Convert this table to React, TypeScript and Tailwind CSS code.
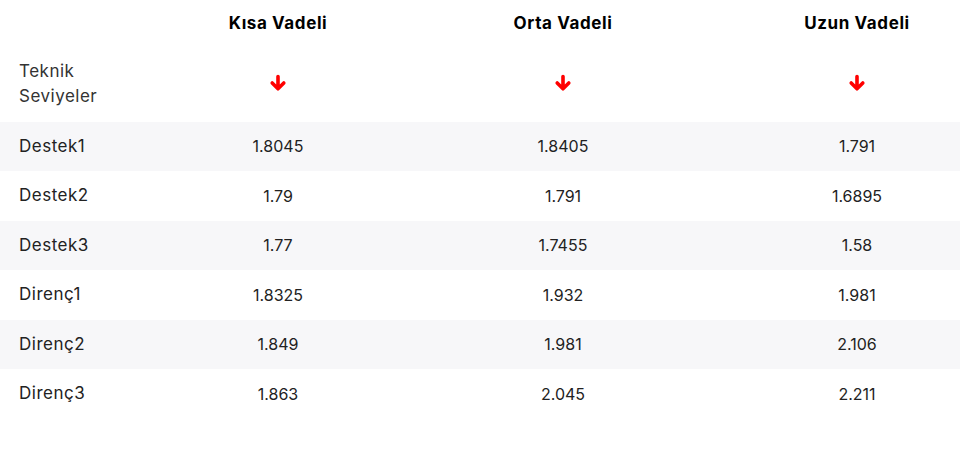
import React from "react";

const rows: [string, string, string, string][] = [
  ["Destek1", "1.8045", "1.8405", "1.791"],
  ["Destek2", "1.79", "1.791", "1.6895"],
  ["Destek3", "1.77", "1.7455", "1.58"],
  ["Direnç1", "1.8325", "1.932", "1.981"],
  ["Direnç2", "1.849", "1.981", "2.106"],
  ["Direnç3", "1.863", "2.045", "2.211"],
];

function DownArrow() {
  return (
    <svg width="18" height="18" viewBox="0 0 18 18" fill="none">
      <path
        d="M9 2.5V14.5M3.2 9L9 14.8L14.8 9"
        stroke="#ff0000"
        strokeWidth="3.6"
        strokeLinecap="round"
        strokeLinejoin="round"
      />
    </svg>
  );
}

export default function App() {
  return (
    <div
      className="w-[960px] h-[449px] bg-white text-[#222] overflow-hidden"
      style={{ fontFamily: "Inter, 'Noto Sans', sans-serif" }}
    >
      <div className="grid grid-cols-[184px_188px_382px_206px] h-[47px] items-center text-[17px] tracking-[0.6px] font-bold text-black">
        <div />
        <div className="text-center">Kısa Vadeli</div>
        <div className="text-center">Orta Vadeli</div>
        <div className="text-center">Uzun Vadeli</div>
      </div>
      <div className="grid grid-cols-[184px_188px_382px_206px] h-[74.5px] items-center">
        <div className="pl-[19px] leading-[25px] text-[#333] text-[17px] tracking-[0.5px]">
          Teknik
          <br />
          Seviyeler
        </div>
        {[0, 1, 2].map((i) => (
          <div key={i} className="flex justify-center pb-[3px]">
            <DownArrow />
          </div>
        ))}
      </div>
      {rows.map((r, i) => (
        <div
          key={r[0]}
          className={`grid grid-cols-[184px_188px_382px_206px] h-[49.5px] items-center text-[16px] ${
            i % 2 === 0 ? "bg-[#f7f7f9]" : "bg-white"
          }`}
        >
          <div className="pl-[19px] text-[17px] tracking-[0.5px]">{r[0]}</div>
          <div className="text-center">{r[1]}</div>
          <div className="text-center">{r[2]}</div>
          <div className="text-center">{r[3]}</div>
        </div>
      ))}
    </div>
  );
}
